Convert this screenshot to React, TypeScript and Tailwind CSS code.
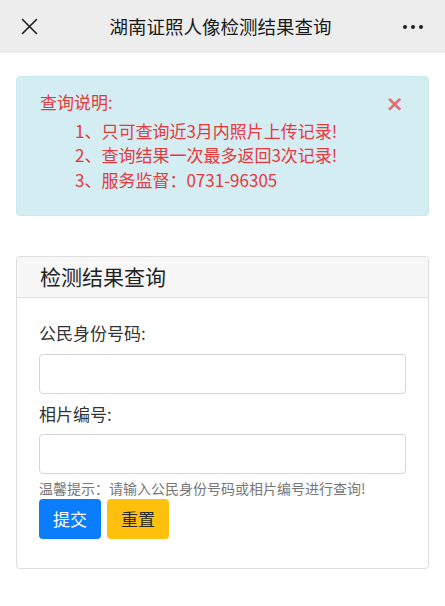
import React from "react";

export default function App() {
  const font = { fontFamily: '"Noto Sans CJK SC", "Noto Sans", sans-serif' };
  return (
    <div className="w-[445px] h-[606px] bg-white overflow-hidden" style={font}>
      {/* top bar */}
      <div className="h-[53px] bg-[#ededed] flex items-center px-[21px] relative">
        <svg width="17" height="17" viewBox="0 0 17 17" className="shrink-0">
          <path d="M1.5 1.5 L15.5 15.5 M15.5 1.5 L1.5 15.5" stroke="#1f1f1f" strokeWidth="1.6" strokeLinecap="round" />
        </svg>
        <div className="flex-1 text-center text-[18.5px] text-[#1a1a1a] leading-none">湖南证照人像检测结果查询</div>
        <div className="flex gap-[4px] items-center pr-[1px]">
          <span className="w-[4px] h-[4px] rounded-full bg-[#1f1f1f]" />
          <span className="w-[4px] h-[4px] rounded-full bg-[#1f1f1f]" />
          <span className="w-[4px] h-[4px] rounded-full bg-[#1f1f1f]" />
        </div>
      </div>

      <div className="px-[16px] pt-[23px]">
        {/* alert */}
        <div className="relative h-[140px] bg-[#d3edf2] rounded-[4px] border border-[#c9e8ee] pl-[23px] pt-[13px] text-[#e5393d] text-[17px] leading-[24.5px]">
          <div className="mb-[4px]">查询说明:</div>
          <div className="pl-[35px]">1、只可查询近3月内照片上传记录!</div>
          <div className="pl-[35px]">2、查询结果一次最多返回3次记录!</div>
          <div className="pl-[35px]">3、服务监督：0731-96305</div>
          <span className="absolute right-[24px] top-[16px] text-[22px] font-bold leading-[22px] text-[#e36b75]" style={{ fontFamily: '"DejaVu Sans", sans-serif' }}>×</span>
        </div>

        {/* card */}
        <div className="mt-[40px] border border-[#dedede] rounded-[4px] overflow-hidden">
          <div className="h-[41px] bg-[#f7f7f7] border-b border-[#dedede] flex items-center pl-[23px] text-[21px] text-[#222]">
            检测结果查询
          </div>
          <div className="px-[22px] pt-[23px] pb-[29px]">
            <div className="text-[17px] leading-[24px] text-[#333]">公民身份号码:</div>
            <div className="mt-[9px] h-[40px] border border-[#d6d6d6] rounded-[4px] bg-white" />
            <div className="mt-[8px] text-[17px] leading-[24px] text-[#333]">相片编号:</div>
            <div className="mt-[8px] h-[40px] border border-[#d6d6d6] rounded-[4px] bg-white" />
            <div className="mt-[4px] text-[14px] leading-[20px] text-[#777]">温馨提示：请输入公民身份号码或相片编号进行查询!</div>
            <div className="mt-[1px] flex gap-[6px]">
              <div className="w-[62px] h-[40px] rounded-[4px] bg-[#0a7dfd] text-white text-[17px] flex items-center justify-center">提交</div>
              <div className="w-[62px] h-[40px] rounded-[4px] bg-[#fec00d] text-[#2a2a2a] text-[17px] flex items-center justify-center">重置</div>
            </div>
          </div>
        </div>
      </div>
    </div>
  );
}
